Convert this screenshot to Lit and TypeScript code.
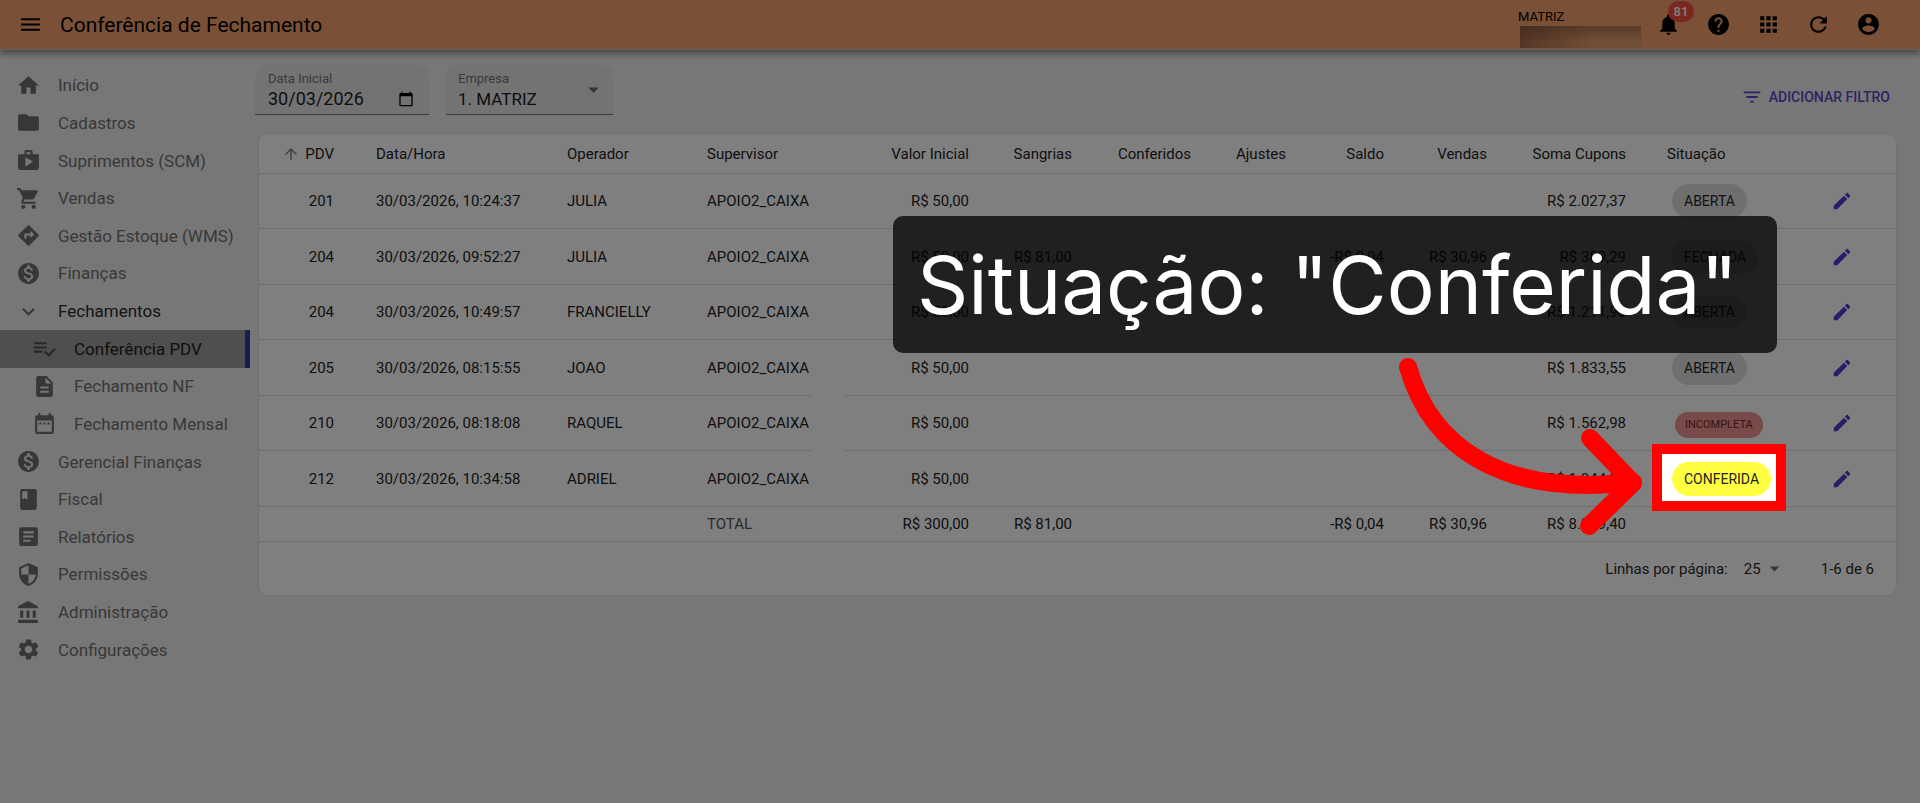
import { LitElement, html, css, svg, nothing } from "lit";
import { customElement, property } from "lit/decorators.js";

const ICONS: Record<string, string> = {
  menu: "M3 18h18v-2H3v2zm0-5h18v-2H3v2zm0-7v2h18V6H3z",
  home: "M10 20v-6h4v6h5v-8h3L12 3 2 12h3v8z",
  folder: "M10 4H4c-1.1 0-1.99.9-1.99 2L2 18c0 1.1.9 2 2 2h16c1.1 0 2-.9 2-2V8c0-1.1-.9-2-2-2h-8l-2-2z",
  shop: "M16 6V4c0-1.11-.89-2-2-2h-4c-1.11 0-2 .89-2 2v2H2v13c0 1.11.89 2 2 2h16c1.11 0 2-.89 2-2V6h-6zm-6-2h4v2h-4V4zM9 18V9l7.5 4L9 18z",
  cart: "M7 18c-1.1 0-1.99.9-1.99 2S5.9 22 7 22s2-.9 2-2-.9-2-2-2zM1 2v2h2l3.6 7.59-1.35 2.45c-.16.28-.25.61-.25.96 0 1.1.9 2 2 2h12v-2H7.42c-.14 0-.25-.11-.25-.25l.03-.12.9-1.63h7.45c.75 0 1.41-.41 1.75-1.03l3.58-6.49c.08-.14.12-.31.12-.48 0-.55-.45-1-1-1H5.21l-.94-2H1zm16 16c-1.1 0-1.99.9-1.99 2s.89 2 1.99 2 2-.9 2-2-.9-2-2-2z",
  directions: "M21.71 11.29l-9-9a.996.996 0 0 0-1.41 0l-9 9a.996.996 0 0 0 0 1.41l9 9c.39.39 1.02.39 1.41 0l9-9a.996.996 0 0 0 0-1.41zM14 14.5V12h-4v3H8v-4c0-.55.45-1 1-1h5V7.5l3.5 3.5-3.5 3.5z",
  money: "M12 2C6.48 2 2 6.48 2 12s4.48 10 10 10 10-4.48 10-10S17.52 2 12 2zm1.41 16.09V20h-2.67v-1.93c-1.71-.36-3.16-1.46-3.27-3.4h1.96c.1 1.05.82 1.87 2.65 1.87 1.96 0 2.4-.98 2.4-1.59 0-.83-.44-1.61-2.67-2.14-2.48-.6-4.18-1.62-4.18-3.67 0-1.72 1.39-2.84 3.11-3.21V4h2.67v1.95c1.86.45 2.79 1.86 2.85 3.39H14.3c-.05-1.11-.64-1.87-2.22-1.87-1.5 0-2.4.68-2.4 1.64 0 .84.65 1.39 2.67 1.91s4.18 1.39 4.18 3.91c-.01 1.83-1.38 2.83-3.12 3.16z",
  expand: "M16.59 8.59L12 13.17 7.41 8.59 6 10l6 6 6-6z",
  playlist: "M14 10H2v2h12v-2zm0-4H2v2h12V6zM2 16h8v-2H2v2zm19.5-4.5L23 13l-6.99 7-4.51-4.5L13 14l3.01 3 5.49-5.5z",
  file: "M14 2H6c-1.1 0-1.99.9-1.99 2L4 20c0 1.1.89 2 1.99 2H18c1.1 0 2-.9 2-2V8l-6-6zm2 16H8v-2h8v2zm0-4H8v-2h8v2zm-3-5V3.5L18.5 9H13z",
  dateRange: "M9 11H7v2h2v-2zm4 0h-2v2h2v-2zm4 0h-2v2h2v-2zm2-7h-1V2h-2v2H8V2H6v2H5c-1.11 0-1.99.9-1.99 2L3 20c0 1.1.89 2 2 2h14c1.1 0 2-.9 2-2V6c0-1.1-.9-2-2-2zm0 16H5V9h14v11z",
  book: "M18 2H6c-1.1 0-2 .9-2 2v16c0 1.1.9 2 2 2h12c1.1 0 2-.9 2-2V4c0-1.1-.9-2-2-2zM6 4h5v8l-2.5-1.5L6 12V4z",
  article: "M19 3H5c-1.1 0-2 .9-2 2v14c0 1.1.9 2 2 2h14c1.1 0 2-.9 2-2V5c0-1.1-.9-2-2-2zm-5 14H7v-2h7v2zm3-4H7v-2h10v2zm0-4H7V7h10v2z",
  shield: "M12 1L3 5v6c0 5.55 3.84 10.74 9 12 5.16-1.26 9-6.45 9-12V5l-9-4zm0 10.99h7c-.53 4.12-3.28 7.79-7 8.94V12H5V6.3l7-3.11v8.8z",
  bank: "M4 10v7h3v-7H4zm6 0v7h3v-7h-3zM2 22h19v-3H2v3zm14-12v7h3v-7h-3zm-4.5-9L2 6v2h19V6l-9.5-5z",
  gear: "M19.14 12.94c.04-.3.06-.61.06-.94 0-.32-.02-.64-.07-.94l2.03-1.58c.18-.14.23-.41.12-.61l-1.92-3.32c-.12-.22-.37-.29-.59-.22l-2.39.96c-.5-.38-1.03-.7-1.62-.94l-.36-2.54c-.04-.24-.24-.41-.48-.41h-3.84c-.24 0-.43.17-.47.41l-.36 2.54c-.59.24-1.13.57-1.62.94l-2.39-.96c-.22-.08-.47 0-.59.22L2.74 8.87c-.12.21-.08.47.12.61l2.03 1.58c-.05.3-.09.63-.09.94s.02.64.07.94l-2.03 1.58c-.18.14-.23.41-.12.61l1.92 3.32c.12.22.37.29.59.22l2.39-.96c.5.38 1.03.7 1.62.94l.36 2.54c.05.24.24.41.48.41h3.84c.24 0 .44-.17.47-.41l.36-2.54c.59-.24 1.13-.56 1.62-.94l2.39.96c.22.08.47 0 .59-.22l1.92-3.32c.12-.22.07-.47-.12-.61l-2.01-1.58zM12 15.6c-1.98 0-3.6-1.62-3.6-3.6s1.62-3.6 3.6-3.6 3.6 1.62 3.6 3.6-1.62 3.6-3.6 3.6z",
  bell: "M12 22c1.1 0 2-.9 2-2h-4c0 1.1.89 2 2 2zm6-6v-5c0-3.07-1.64-5.64-4.5-6.32V4c0-.83-.67-1.5-1.5-1.5s-1.5.67-1.5 1.5v.68C7.63 5.36 6 7.92 6 11v5l-2 2v1h16v-1l-2-2z",
  help: "M12 2C6.48 2 2 6.48 2 12s4.48 10 10 10 10-4.48 10-10S17.52 2 12 2zm1 17h-2v-2h2v2zm2.07-7.75l-.9.92C13.45 12.9 13 13.5 13 15h-2v-.5c0-1.1.45-2.1 1.17-2.83l1.24-1.26c.37-.36.59-.86.59-1.41 0-1.1-.9-2-2-2s-2 .9-2 2H8c0-2.21 1.79-4 4-4s4 1.79 4 4c0 .88-.36 1.68-.93 2.25z",
  apps: "M4 8h4V4H4v4zm6 12h4v-4h-4v4zm-6 0h4v-4H4v4zm0-6h4v-4H4v4zm6 0h4v-4h-4v4zm6-10v4h4V4h-4zm-6 4h4V4h-4v4zm6 6h4v-4h-4v4zm0 6h4v-4h-4v4z",
  refresh: "M17.65 6.35C16.2 4.9 14.21 4 12 4c-4.42 0-7.99 3.58-7.99 8s3.57 8 7.99 8c3.73 0 6.84-2.55 7.73-6h-2.08c-.82 2.33-3.04 4-5.65 4-3.31 0-6-2.69-6-6s2.69-6 6-6c1.66 0 3.14.69 4.22 1.78L13 11h7V4l-2.35 2.35z",
  account: "M12 2C6.48 2 2 6.48 2 12s4.48 10 10 10 10-4.48 10-10S17.52 2 12 2zm0 3c1.66 0 3 1.34 3 3s-1.34 3-3 3-3-1.34-3-3 1.34-3 3-3zm0 14.2c-2.5 0-4.71-1.28-6-3.22.03-1.99 4-3.08 6-3.08 1.99 0 5.97 1.09 6 3.08-1.29 1.94-3.5 3.22-6 3.22z",
  calendar: "M20 3h-1V1h-2v2H7V1H5v2H4c-1.1 0-2 .9-2 2v16c0 1.1.9 2 2 2h16c1.1 0 2-.9 2-2V5c0-1.1-.9-2-2-2zm0 18H4V8h16v13z",
  filter: "M10 18h4v-2h-4v2zM3 6v2h18V6H3zm3 7h12v-2H6v2z",
  caret: "M7 10l5 5 5-5z",
  up: "M4 12l1.41 1.41L11 7.83V20h2V7.83l5.58 5.59L20 12l-8-8-8 8z",
  edit: "M3 17.25V21h3.75L17.81 9.94l-3.75-3.75L3 17.25zM20.71 7.04c.39-.39.39-1.02 0-1.41l-2.34-2.34c-.39-.39-1.02-.39-1.41 0l-1.83 1.83 3.75 3.75 1.83-1.83z",
};

@customElement("app-icon")
class AppIcon extends LitElement {
  @property() name = "";
  static styles = css`
    :host { display: inline-flex; width: 25px; height: 25px; flex: none; }
    svg { width: 100%; height: 100%; fill: currentColor; }
  `;
  render() {
    return html`<svg viewBox="0 0 24 24" aria-hidden="true">${svg`<path d=${ICONS[this.name] ?? ""}></path>`}</svg>`;
  }
}

interface NavItem { icon: string; label: string; kind?: "open" | "sub" | "active"; }

const NAV: NavItem[] = [
  { icon: "home", label: "Início" },
  { icon: "folder", label: "Cadastros" },
  { icon: "shop", label: "Suprimentos (SCM)" },
  { icon: "cart", label: "Vendas" },
  { icon: "directions", label: "Gestão Estoque (WMS)" },
  { icon: "money", label: "Finanças" },
  { icon: "expand", label: "Fechamentos", kind: "open" },
  { icon: "playlist", label: "Conferência PDV", kind: "active" },
  { icon: "file", label: "Fechamento NF", kind: "sub" },
  { icon: "dateRange", label: "Fechamento Mensal", kind: "sub" },
  { icon: "money", label: "Gerencial Finanças" },
  { icon: "book", label: "Fiscal" },
  { icon: "article", label: "Relatórios" },
  { icon: "shield", label: "Permissões" },
  { icon: "bank", label: "Administração" },
  { icon: "gear", label: "Configurações" },
];

@customElement("side-nav")
class SideNav extends LitElement {
  static styles = css`
    :host { display: block; width: 250px; flex: none; padding-top: 18px; box-sizing: border-box; }
    ul { list-style: none; margin: 0; padding: 0; height: 602px; display: flex; flex-direction: column; }
    li { flex: 1; display: flex; }
    a {
      flex: 1; display: flex; align-items: center; gap: 17px; padding: 0 0 1px 16px; box-sizing: border-box;
      color: #717171; font-size: 17px; line-height: 24px; text-decoration: none; white-space: nowrap;
    }
    app-icon { color: #6e6e6e; }
    .open { color: #2a2a2a; }
    .sub, .active { padding-left: 32px; }
    .active { color: #1c1c1c; background: #9e9e9e; border-right: 5px solid #303f9f; }
    .active app-icon { color: #505050; }
  `;
  render() {
    return html`<nav aria-label="Menu principal"><ul>
      ${NAV.map((n) => html`<li><a href="#" class=${n.kind ?? "item"}><app-icon name=${n.icon}></app-icon>${n.label}</a></li>`)}
    </ul></nav>`;
  }
}

interface Row {
  pdv: string; when: string; operator: string; values: string[]; status: string; tone: string;
}

const ROWS: Row[] = [
  { pdv: "201", when: "30/03/2026, 10:24:37", operator: "JULIA", values: ["R$ 50,00", "", "", "", "", "", "R$ 2.027,37"], status: "ABERTA", tone: "grey" },
  { pdv: "204", when: "30/03/2026, 09:52:27", operator: "JULIA", values: ["R$ 50,00", "R$ 81,00", "", "", "-R$ 0,04", "R$ 30,96", "R$ 389,29"], status: "FECHADA", tone: "green" },
  { pdv: "204", when: "30/03/2026, 10:49:57", operator: "FRANCIELLY", values: ["R$ 50,00", "", "", "", "", "", "R$ 1.211,96"], status: "ABERTA", tone: "grey" },
  { pdv: "205", when: "30/03/2026, 08:15:55", operator: "JOAO", values: ["R$ 50,00", "", "", "", "", "", "R$ 1.833,55"], status: "ABERTA", tone: "grey" },
  { pdv: "210", when: "30/03/2026, 08:18:08", operator: "RAQUEL", values: ["R$ 50,00", "", "", "", "", "", "R$ 1.562,98"], status: "INCOMPLETA", tone: "red" },
  { pdv: "212", when: "30/03/2026, 10:34:58", operator: "ADRIEL", values: ["R$ 50,00", "", "", "", "", "", "R$ 1.944,25"], status: "CONFERIDA", tone: "yellow" },
];

const TOTALS = ["R$ 300,00", "R$ 81,00", "", "", "-R$ 0,04", "R$ 30,96", "R$ 8.969,40"];
const NUMERIC = ["Valor Inicial", "Sangrias", "Conferidos", "Ajustes", "Saldo", "Vendas", "Soma Cupons"];

@customElement("closing-table")
class ClosingTable extends LitElement {
  static styles = css`
    :host { display: block; background: #fff; border: 1px solid #e2e2e2; border-radius: 10px; }
    table { width: 100%; table-layout: fixed; border-collapse: separate; border-spacing: 0; }
    .c-pdv { width: 96px; } .c-when { width: 191px; } .c-op { width: 140px; } .c-sup { width: 126px; }
    .c-gap { width: 32px; } .c-ini { width: 145px; } .c-san { width: 103px; } .c-conf { width: 119px; }
    .c-aj { width: 95px; } .c-sal { width: 98px; } .c-ven { width: 103px; } .c-soma { width: 139px; }
    .c-sit { width: 141px; } .c-act { width: 109px; }
    th, td {
      padding: 0 0 0 21px; border-bottom: 1px solid #dedede; box-sizing: border-box; height: 55px;
      font-size: 15px; line-height: 20px; font-weight: 400; color: #222; text-align: left; white-space: nowrap;
    }
    th { height: 40px; }
    tbody tr:nth-child(even) td { height: 56px; }
    tfoot td { height: 35px; }
    .num { text-align: right; padding: 0 20px 0 0; }
    .pdv { padding: 0 21px 0 0; text-align: right; }
    .sort { display: flex; align-items: center; justify-content: flex-end; gap: 5px; }
    .sort app-icon { width: 18px; height: 18px; color: #808080; }
    .plain { border-bottom-color: transparent; }
    .total { color: #555; }
    .gap { padding: 0; }
    .chipcell { padding-left: 26px; }
    .chip { display: inline-flex; align-items: center; height: 34px; padding: 0 12px; border-radius: 17px; font-size: 14px; vertical-align: middle; }
    .grey { background: #dfdfdf; }
    .green { background: #d4e6cf; }
    .yellow { background: #ffff42; }
    .red { background: #f09494; color: #6b2626; height: 26px; padding: 0 10px; margin: 4px 0 0 3px; border-radius: 13px; font-size: 11px; }
    .act { text-align: center; padding: 0; }
    button { border: 0; background: none; padding: 0; color: #523ad0; display: inline-flex; vertical-align: middle; cursor: pointer; }
    button app-icon { width: 22px; height: 22px; }
    .pager { display: flex; align-items: center; justify-content: flex-end; height: 53px; padding-right: 22px; font-size: 15px; color: #2a2a2a; }
    .size { position: relative; display: flex; align-items: center; margin: 0 40px 0 16px; }
    .size app-icon { width: 23px; height: 23px; position: absolute; right: -5px; color: #707070; pointer-events: none; }
    select { appearance: none; border: 0; background: none; font: inherit; color: inherit; padding: 0 20px 0 0; margin: 0; }
  `;
  render() {
    return html`
      <table>
        <colgroup>
          ${["pdv", "when", "op", "sup", "gap", "ini", "san", "conf", "aj", "sal", "ven", "soma", "sit", "act"].map((c) => html`<col class="c-${c}" />`)}
        </colgroup>
        <thead>
          <tr>
            <th class="pdv" scope="col" aria-sort="ascending"><span class="sort"><app-icon name="up"></app-icon>PDV</span></th>
            <th scope="col">Data/Hora</th><th scope="col">Operador</th><th scope="col">Supervisor</th><th class="gap"></th>
            ${NUMERIC.map((h) => html`<th class="num" scope="col">${h}</th>`)}
            <th scope="col">Situação</th><th></th>
          </tr>
        </thead>
        <tbody>
          ${ROWS.map((r, i) => html`<tr>
            <td class="pdv">${r.pdv}</td><td>${r.when}</td><td>${r.operator}</td><td>APOIO2_CAIXA</td>
            <td class=${i === 3 || i === 4 ? "gap plain" : "gap"}></td>
            ${r.values.map((v) => html`<td class="num">${v || nothing}</td>`)}
            <td class="chipcell"><span class="chip ${r.tone}">${r.status}</span></td>
            <td class="act"><button aria-label="Editar PDV ${r.pdv}"><app-icon name="edit"></app-icon></button></td>
          </tr>`)}
        </tbody>
        <tfoot>
          <tr>
            <td></td><td></td><td></td><td class="total">TOTAL</td><td class="gap"></td>
            ${TOTALS.map((v) => html`<td class="num">${v || nothing}</td>`)}
            <td></td><td></td>
          </tr>
        </tfoot>
      </table>
      <div class="pager">
        <label for="size">Linhas por página:</label>
        <span class="size"><select id="size"><option>25</option></select><app-icon name="caret"></app-icon></span>
        <span>1-6 de 6</span>
      </div>`;
  }
}

@customElement("app-root")
class AppRoot extends LitElement {
  static styles = css`
    :host {
      display: flex; flex-direction: column; position: relative; min-height: 100vh; overflow: hidden;
      background: #eee; font-family: Roboto, "Liberation Sans", sans-serif; color: #111;
    }
    header {
      display: flex; align-items: center; height: 49px; box-sizing: border-box; padding: 0 39px 0 18px; background: #f4a16c;
      box-shadow: 0 1px 0 #c8c8c8, 0 3px 7px 1px rgba(0, 0, 0, 0.45); z-index: 1; color: #000;
    }
    button { border: 0; background: none; padding: 0; color: inherit; font: inherit; display: inline-flex; cursor: pointer; }
    h1 { margin: 0 auto 0 17px; font-size: 21px; line-height: 28px; font-weight: 400; }
    .store { display: flex; flex-direction: column; gap: 1px; width: 124px; margin-right: 14px; font-size: 13px; line-height: 17px; align-self: flex-end; }
    .masked { height: 22px; margin: 0 1px 1px 2px; background: linear-gradient(100deg, rgba(70, 40, 25, 0.4), transparent 60%), linear-gradient(#b67a55, #e49a6b 75%); }
    .tools { display: flex; align-items: center; gap: 25px; }
    .alerts { position: relative; }
    .badge {
      position: absolute; left: 12px; top: -11px; min-width: 26px; height: 21px; border-radius: 11px; background: #f4503f;
      color: #fff; font-size: 13px; line-height: 21px; text-align: center; font-weight: 500;
    }
    .body { display: flex; flex: 1; }
    main { flex: 1; min-width: 0; padding: 16px 23px 24px 5px; }
    .filters { display: flex; gap: 17px; align-items: flex-start; }
    .field {
      position: relative; box-sizing: border-box; width: 174px; height: 50px; padding: 6px 13px 0; background: #e6e6e6;
      border-bottom: 1px solid #777; border-radius: 10px 10px 0 0; display: flex; flex-direction: column;
    }
    .field label { font-size: 13px; line-height: 16px; color: #757575; }
    .company { width: 167px; padding-left: 12px; }
    .row { display: flex; align-items: center; justify-content: space-between; }
    .field input, .field select {
      width: 100%; min-width: 0; border: 0; padding: 0; margin: 0; background: none; appearance: none; font: inherit;
      font-size: 17px; line-height: 24px; height: 24px; color: #1c1c1c;
    }
    .field input { font-size: 18px; }
    .row app-icon { width: 16px; height: 16px; margin-right: 2px; color: #000; }
    .arrow { position: absolute; right: 7px; top: 12px; color: #666; pointer-events: none; }
    .add { margin: 20px 7px 0 auto; align-items: center; gap: 6px; color: #5a48c8; font-size: 14px; font-weight: 500; line-height: 24px; }
    .add app-icon { width: 22px; height: 22px; }
    closing-table { margin: 18px 0 0 3px; }
    .guide { position: absolute; inset: 0; z-index: 2; pointer-events: none; }
    .spot {
      position: absolute; right: 134px; top: 444px; width: 134px; height: 67px; box-sizing: border-box;
      border: 10px solid #f00; box-shadow: 0 0 0 4000px rgba(0, 0, 0, 0.5);
    }
    .caption {
      position: absolute; right: 143px; top: 216px; width: 884px; height: 137px; box-sizing: border-box; padding-left: 24px;
      border-radius: 10px; background: rgba(0, 0, 0, 0.75); color: #fff; display: flex; align-items: center;
      font-family: Inter, sans-serif; font-size: 80px; line-height: 106px; white-space: nowrap;
    }
    .pointer { position: absolute; right: 270px; top: 350px; width: 260px; height: 200px; }
    .pointer path { fill: none; stroke: #f00; stroke-width: 18; stroke-linecap: round; stroke-linejoin: round; }
  `;
  render() {
    return html`
      <header>
        <button aria-label="Abrir menu"><app-icon name="menu"></app-icon></button>
        <h1>Conferência de Fechamento</h1>
        <div class="store"><span>MATRIZ</span><span class="masked"></span></div>
        <div class="tools">
          <button class="alerts" aria-label="Notificações"><app-icon name="bell"></app-icon><span class="badge">81</span></button>
          <button aria-label="Ajuda"><app-icon name="help"></app-icon></button>
          <button aria-label="Aplicativos"><app-icon name="apps"></app-icon></button>
          <button aria-label="Atualizar"><app-icon name="refresh"></app-icon></button>
          <button aria-label="Conta"><app-icon name="account"></app-icon></button>
        </div>
      </header>
      <div class="body">
        <side-nav></side-nav>
        <main>
          <div class="filters">
            <div class="field">
              <label for="start">Data Inicial</label>
              <div class="row"><input id="start" type="text" .value=${"30/03/2026"} /><app-icon name="calendar"></app-icon></div>
            </div>
            <div class="field company">
              <label for="company">Empresa</label>
              <select id="company"><option>1. MATRIZ</option></select>
              <app-icon class="arrow" name="caret"></app-icon>
            </div>
            <button class="add"><app-icon name="filter"></app-icon>ADICIONAR FILTRO</button>
          </div>
          <closing-table></closing-table>
        </main>
      </div>
      <div class="guide">
        <div class="spot"></div>
        <div class="caption">Situação: "Conferida"</div>
        <svg class="pointer" viewBox="0 0 260 200" aria-hidden="true">
          <path d="M18 17C40 95 110 148 243 132"></path>
          <path d="M200 88L243 133L199 176"></path>
        </svg>
      </div>`;
  }
}
